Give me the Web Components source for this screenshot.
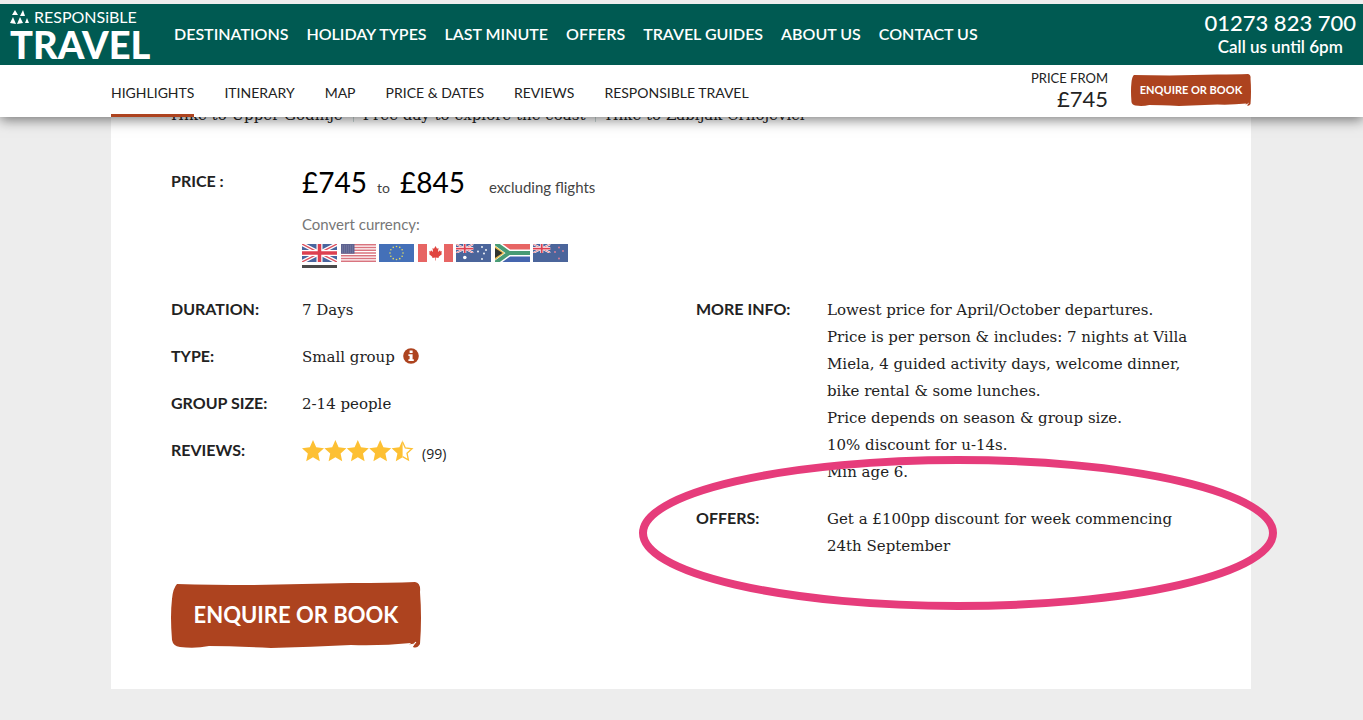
<!DOCTYPE html>
<html lang="en">
<head>
<meta charset="utf-8">
<title>Responsible Travel – Holiday</title>
<style>
  body { margin: 0; background: #ededed; font-family: Lato, "Open Sans", sans-serif; color: #222; }
</style>
</head>
<body>
<rt-header></rt-header>
<rt-card>
  <rt-route slot="route"></rt-route>
  <rt-price slot="price"></rt-price>
  <rt-fact slot="left" label="Duration:">7 Days</rt-fact>
  <rt-fact slot="left" label="Type:">Small group <rt-info></rt-info></rt-fact>
  <rt-fact slot="left" label="Group size:">2-14 people</rt-fact>
  <rt-fact slot="left" label="Reviews:"><rt-rating></rt-rating></rt-fact>
  <rt-fact slot="right" label="More info:">Lowest price for April/October departures.<br>Price is per person &amp; includes: 7 nights at Villa<br>Miela, 4 guided activity days, welcome dinner,<br>bike rental &amp; some lunches.<br>Price depends on season &amp; group size.<br>10% discount for u-14s.<br>Min age 6.</rt-fact>
  <rt-fact slot="right" label="Offers:">Get a £100pp discount for week commencing<br>24th September</rt-fact>
  <rt-button slot="action" size="large">ENQUIRE OR BOOK</rt-button>
</rt-card>

<script>
const define = (name, html, setup) => customElements.define(name, class extends HTMLElement {
  connectedCallback() {
    if (this.shadowRoot) return;
    const root = this.attachShadow({ mode: 'open' });
    root.innerHTML = html;
    if (setup) setup(this, root);
  }
});

define('rt-button', `
<style>
  :host { display: inline-block; }
  button { display: grid; place-items: center; width: 120px; height: 32px; padding: 0; border: 0; background: none; color: #fff; font: bold 11px/16px Lato, sans-serif; cursor: pointer; }
  svg, span { grid-area: 1 / 1; }
  svg { width: 100%; height: 100%; }
  :host([size=large]) button { width: 250px; height: 66px; font-size: 22px; line-height: 32px; }
</style>
<button type="button">
  <svg viewBox="0 0 250 66" preserveAspectRatio="none" aria-hidden="true"><path fill="#ad431f" d="M6 2Q40 3 80 3Q130 2 180 1Q220 1 244 0Q250 1 249 10Q251 36 249 62Q246 67 242 65L243 62L238 63L240 61Q210 64 180 63Q140 65 100 66Q60 64 38 64Q24 67 9 65Q2 64 1 58Q-1 34 1 17Q2 6 6 2Z"/><path d="M238 63Q243 63 245 60L241 65" fill="none" stroke="#fff" stroke-width="1"/></svg>
  <span><slot></slot></span>
</button>`);

define('rt-logo', `
<style>
  :host { display: block; }
  a { display: block; color: #fff; text-decoration: none; }
  svg { display: block; overflow: visible; }
  text { fill: #fff; font-family: Lato, sans-serif; }
</style>
<a href="#home" aria-label="Responsible Travel">
<svg width="142" height="58" viewBox="0 0 142 58">
  <path fill="#fff" d="M5 4L8 9H2ZM13 4L15 10H10ZM3 11L6 18L0 17ZM10 11L13 17L7 18ZM17 12L19 17H15Z"/>
  <text x="24" y="17" font-size="16">RESPONSiBLE</text>
  <text x="0" y="53" font-size="38" font-weight="900">TRAVEL</text>
</svg></a>`);

define('rt-header', `
<style>
  :host { display: block; position: sticky; top: 0; z-index: 2; background: #fff; box-shadow: 0 3px 12px rgba(0,0,0,.5); }
  a { text-decoration: none; color: inherit; }
  .top { display: flex; align-items: center; height: 61px; border-top: 4px solid #eee; padding: 0 7px 0 10px; background: #005a52; color: #fff; }
  .main { display: flex; gap: 18px; margin-left: 22px; margin-bottom: 2px; font-size: 16px; line-height: 24px; font-weight: 600; }
  .phone { margin-left: auto; text-align: center; font-size: 17px; line-height: 24px; font-weight: 600; }
  .phone a { display: block; font-size: 22px; font-weight: 500; }
  .wrap { padding-right: 1px; }
  .sub { display: flex; align-items: stretch; height: 52px; max-width: 1140px; margin: 0 auto; font-size: 14px; line-height: 20px; }
  .tabs { display: flex; gap: 30px; }
  .tabs a { padding-top: 18px; border-bottom: 3px solid transparent; }
  .tabs a[aria-current] { border-color: #ad431f; }
  .from { margin-left: auto; margin-right: 23px; padding-top: 4px; text-align: right; font-size: 13px; line-height: 18px; }
  .from strong { display: block; font-weight: 400; font-size: 22px; line-height: 24px; }
  rt-button { margin-top: 9px; }
</style>
<header>
  <div class="top">
    <rt-logo></rt-logo>
    <nav class="main" aria-label="Main">
      <a href="#d">DESTINATIONS</a><a href="#h">HOLIDAY TYPES</a><a href="#l">LAST MINUTE</a><a href="#o">OFFERS</a><a href="#t">TRAVEL GUIDES</a><a href="#a">ABOUT US</a><a href="#c">CONTACT US</a>
    </nav>
    <div class="phone"><a href="tel:01273823700">01273 823 700</a>Call us until 6pm</div>
  </div>
  <div class="wrap"><div class="sub">
    <nav class="tabs" aria-label="Holiday">
      <a href="#hi" aria-current="true">HIGHLIGHTS</a><a href="#it">ITINERARY</a><a href="#map">MAP</a><a href="#pd">PRICE &amp; DATES</a><a href="#rev">REVIEWS</a><a href="#rt">RESPONSIBLE TRAVEL</a>
    </nav>
    <div class="from">PRICE FROM<strong>£745</strong></div>
    <rt-button>ENQUIRE OR BOOK</rt-button>
  </div></div>
</header>`);

define('rt-card', `
<style>
  :host { display: block; padding-right: 1px; }
  main { position: relative; max-width: 1020px; margin: -15px auto 31px; padding: 0 60px 41px; background: #fff; }
  .cols { display: grid; grid-template-columns: 1fr 1fr; gap: 30px; margin: 28px 0 22px; }
  .col { display: flex; flex-direction: column; gap: 19px; }
  .mark { position: absolute; right: -26px; top: 354px; width: 638px; height: 154px; pointer-events: none; }
  ::slotted(rt-button) { vertical-align: top; }
</style>
<main>
  <slot name="route"></slot>
  <slot name="price"></slot>
  <div class="cols"><div class="col"><slot name="left"></slot></div><div class="col"><slot name="right"></slot></div></div>
  <slot name="action"></slot>
  <svg class="mark" viewBox="0 0 638 154" aria-hidden="true"><ellipse cx="319" cy="77" rx="315" ry="73" fill="none" stroke="#e63c7b" stroke-width="8"/></svg>
</main>`);

define('rt-route', `
<style>
  :host { display: block; font: 15px/27px "DejaVu Serif", serif; }
  ul { display: flex; margin: 0; padding: 0; list-style: none; }
  li + li { margin-left: 10px; padding-left: 10px; background: linear-gradient(#cbdad8, #cbdad8) 0 0 / 1px 20px no-repeat; }
</style>
<ul><li>Hike to Upper Godinje</li><li>Free day to explore the coast</li><li>Hike to Zabljak Crnojevici</li></ul>`);

define('rt-fact', `
<style>
  :host { display: grid; grid-template-columns: 131px 1fr; line-height: 27px; font-size: 15px; font-family: "DejaVu Serif", serif; white-space: nowrap; }
  b { font: bold 16px/26px Lato, sans-serif; text-transform: uppercase; }
  div { padding-top: 1px; }
</style>
<b></b><div><slot></slot></div>`, (el, root) => { root.querySelector('b').textContent = el.getAttribute('label'); });

define('rt-info', `
<style>:host { display: inline-block; vertical-align: -2px; margin-left: 3px; } svg { display: block; }</style>
<svg width="16" height="16" viewBox="0 0 16 16" role="img" aria-label="Information"><circle cx="8" cy="8" r="7.8" fill="#ad431f"/><path fill="#fff" d="M6.6 2.5H9.6V5H6.6ZM5.4 6.3H9.6V11.2H10.8V13H5.4V11.2H6.6V8H5.4Z"/></svg>`);

define('rt-rating', `
<style>
  :host { display: flex; align-items: flex-end; height: 27px; gap: 8px; font: 14px/22px "Open Sans", sans-serif; }
  svg { display: block; margin-bottom: 3px; }
</style>
<svg width="112" height="22" viewBox="0 0 112 22" role="img" aria-label="4.5 out of 5"><defs><path id="s" d="M11 0L14.2 7.3L22 8.2L16.2 13.4L17.8 21.2L11 17.2L4.2 21.2L5.8 13.4L0 8.2L7.8 7.3Z"/></defs>
<g fill="#fdc033"><use href="#s"/><use href="#s" x="22.4"/><use href="#s" x="44.8"/><use href="#s" x="67.2"/><path d="M100.6 0V17.2L93.8 21.2L95.4 13.4L89.6 8.2L97.4 7.3Z"/></g><path d="M100.6 2L103.3 8L110 8.8L105 13.2L106.4 20L100.6 16.6" fill="none" stroke="#fdc033" stroke-width="1.3"/></svg>
<span>(99)</span>`);

const union = `<path fill="#49659f" d="M0 0H35V18H0Z"/><path d="M0 0L35 18M35 0L0 18" stroke="#fff" stroke-width="4"/><path d="M0 0L35 18M35 0L0 18" stroke="#dd5260" stroke-width="1.4"/><path d="M17.5 0V18M0 9H35" stroke="#fff" stroke-width="6"/><path d="M17.5 0V18M0 9H35" stroke="#dd4050" stroke-width="3.5"/>`;
const jack = `<path fill="#4b659b" d="M0 0H35V18H0Z"/><svg width="17.5" height="9" viewBox="0 0 35 18">${union}</svg>`;
const dots = (pts, r, c) => pts.map(([x, y]) => `<circle cx="${x}" cy="${y}" r="${r}" fill="${c}"/>`).join('');
const ring = Array.from({ length: 12 }, (_, i) => [17.5 + 6.5 * Math.sin(i * Math.PI / 6), 9 - 6.5 * Math.cos(i * Math.PI / 6)]);
const flags = [
  ['GBP', union],
  ['USD', `<path fill="#fff" d="M0 0H35V18H0Z"/><path stroke="#d9747f" stroke-width="1.4" d="M0 .7H35M0 3.5H35M0 6.2H35M0 9H35M0 11.8H35M0 14.5H35M0 17.3H35"/><path fill="#5e6391" d="M0 0H13.5V9.7H0Z"/><path d="M1 2H13M1 4H13M1 6H13M1 8H13" stroke="#8e92b3" stroke-width=".7" stroke-dasharray="1 1"/>`],
  ['EUR', `<path fill="#4470b8" d="M0 0H35V18H0Z"/>${dots(ring, .8, '#e5dc60')}`],
  ['CAD', `<path fill="#e76564" d="M0 0H35V18H0Z"/><path fill="#fff" d="M9 0H26V18H9Z"/><path fill="#e0443f" d="M17.5 2L19 4.7L20.5 4L20 8L22 6.2L22.5 7.5L24 7.2L23.3 9.2L24 10L20.5 13L20.8 14L17.8 13.6V16.5H17.2V13.6L14.2 14L14.5 13L11 10L11.7 9.2L11 7.2L12.5 7.5L13 6.2L15 8L14.5 4L16 4.7Z"/>`],
  ['AUD', `${jack}${dots([[8.8, 13.5]], 1.8, '#fff')}${dots([[26, 3], [22, 7.5], [30, 6], [26, 15], [28, 9.5]], .9, '#fff')}`],
  ['ZAR', `<path fill="#e76564" d="M0 0H35V9H0Z"/><path fill="#4565ae" d="M0 9H35V18H0Z"/><path d="M0 -1L14 9L0 19M14 9H35" fill="none" stroke="#fff" stroke-width="7"/><path d="M0 -1L14 9L0 19M14 9H35" fill="none" stroke="#489b75" stroke-width="4"/><path fill="#e8bc51" d="M0 2L9.5 9L0 16Z"/><path fill="#30352f" d="M0 4L7.5 9L0 14Z"/>`],
  ['NZD', `${jack}${dots([[26, 3.5], [22, 8], [30, 7], [26, 14.5]], 1, '#d77f98')}`]
];

define('rt-price', `
<style>
  :host { display: grid; grid-template-columns: 131px 1fr; margin-top: 36px; }
  b { font-size: 16px; line-height: 26px; padding-top: 3px; }
  .amount { display: flex; align-items: baseline; height: 36px; font-size: 28px; line-height: 34px; color: #000; }
  .amount span { margin: 0 10px; font-size: 14px; color: #444; }
  .amount .note { margin: 0 24px; font-size: 15px; }
  .convert { margin: 10px 0 6px; font-size: 15px; line-height: 27px; color: #777; }
  .flags { display: flex; justify-content: space-between; width: 266px; }
  button { display: block; padding: 0 0 3px; border: 0; border-bottom: 3px solid transparent; background: none; cursor: pointer; }
  button[aria-pressed=true] { border-color: #4a4a4a; }
  svg { display: block; overflow: hidden; }
</style>
<b>PRICE :</b>
<div>
  <div class="amount">£745<span>to</span>£845<span class="note">excluding flights</span></div>
  <div class="convert">Convert currency:</div>
  <div class="flags">${flags.map(([c, art], i) => `<button type="button" aria-label="${c}" aria-pressed="${i === 0}"><svg width="35" height="18" viewBox="0 0 35 18">${art}</svg></button>`).join('')}</div>
</div>`);
</script>
</body>
</html>
